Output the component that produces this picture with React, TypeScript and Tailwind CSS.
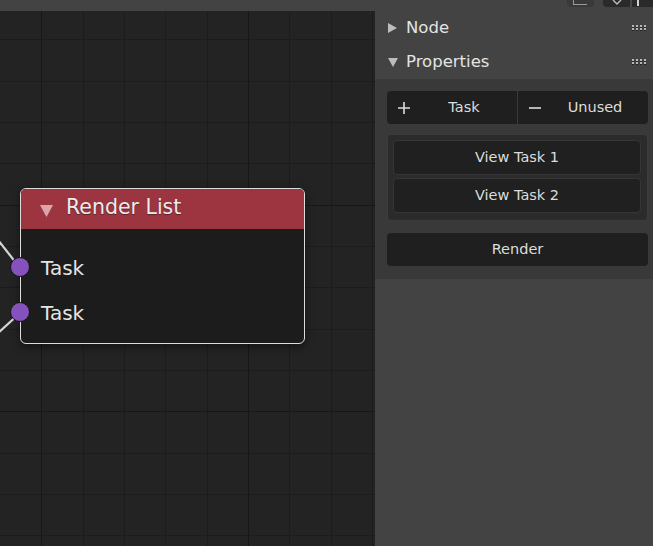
import { ReactNode } from 'react'

const GRID = 41.33
const vLines = [1, 2, 3, 4, 5, 6, 7, 8, 9].map((k) => ({ x: Math.round(k * GRID) + 0.5, major: k === 1 || k === 6 }))
const hLines = [0, 1, 2, 3, 4, 5, 6, 7, 8, 9, 10, 11, 12].map((k) => ({
  y: Math.round(28.3 + k * GRID) + 0.5,
  major: k === 4 || k === 9,
}))

function Grid() {
  return (
    <svg className="absolute inset-0" width="375" height="535">
      {vLines.map((l) => (
        <line key={'v' + l.x} x1={l.x} y1={0} x2={l.x} y2={535} stroke={l.major ? '#171717' : '#1c1c1c'} strokeWidth={1} />
      ))}
      {hLines.map((l) => (
        <line key={'h' + l.y} x1={0} y1={l.y} x2={375} y2={l.y} stroke={l.major ? '#171717' : '#1c1c1c'} strokeWidth={1} />
      ))}
    </svg>
  )
}

function Links() {
  return (
    <svg className="absolute inset-0" width="375" height="535">
      <line x1={-2} y1={229} x2={20} y2={257} stroke="#d6d6d6" strokeWidth={2.2} />
      <line x1={-2} y1={322} x2={20} y2={302} stroke="#d6d6d6" strokeWidth={2.2} />
    </svg>
  )
}

function Socket({ label }: { label: string }) {
  return (
    <div className="relative h-[45px] flex items-center pl-[20px] text-[20px] text-[#e4e4e4]">
      <div className="absolute left-[-11px] top-[12px] w-[20px] h-[20px] rounded-full bg-[#8551bd] border border-[#151515]" />
      {label}
    </div>
  )
}

function RenderNode() {
  return (
    <div className="absolute left-[20px] top-[177px] w-[285px] h-[156px] rounded-[6px] border border-[#dcdcdc] bg-[#1c1c1c]/95 shadow-[0_3px_8px_rgba(0,0,0,0.45)]">
      <div className="h-[40px] flex items-center pb-[3px] rounded-t-[5px] bg-[#9d3541] pl-[19px] text-[20.5px] text-[#ececec] [text-shadow:0_1px_1px_rgba(0,0,0,0.4)]">
        <svg width="13" height="12" viewBox="0 0 13 12" className="mt-[6px]">
          <polygon points="0,0 13,0 6.5,12" fill="#dba6ab" />
        </svg>
        <span className="ml-[13px]">Render List</span>
      </div>
      <div className="pt-[16px]">
        <Socket label="Task" />
        <Socket label="Task" />
      </div>
    </div>
  )
}

function DragHandle() {
  return (
    <svg width="16" height="7" viewBox="0 0 16 7">
      {[0, 4, 8, 12].map((x) => (
        <g key={x}>
          <rect x={x} y={0} width={2} height={2} fill="#b8b8b8" />
          <rect x={x} y={2} width={2} height={1} fill="#222" />
          <rect x={x} y={3} width={2} height={2} fill="#b8b8b8" />
          <rect x={x} y={5} width={2} height={1} fill="#222" />
        </g>
      ))}
    </svg>
  )
}

function PanelHeader({ open, title }: { open: boolean; title: string }) {
  return (
    <div className="h-[34px] flex items-center pl-[13px] pr-[5px] text-[16.5px] text-[#e4e4e4]">
      <svg width="10" height="10" viewBox="0 0 10 10" className="shrink-0">
        {open ? <polygon points="0,1 10,1 5,10" fill="#bcbcbc" /> : <polygon points="0,0 9,5 0,10" fill="#bcbcbc" />}
      </svg>
      <span className="ml-[8px] flex-1">{title}</span>
      <DragHandle />
    </div>
  )
}

function HalfButton({ icon, label }: { icon: ReactNode; label: string }) {
  return (
    <div className="flex-1 flex items-center">
      <div className="w-[24px] pl-[10px] shrink-0 flex">{icon}</div>
      <span className="flex-1 text-center">{label}</span>
    </div>
  )
}

const plus = (
  <svg width="14" height="14" viewBox="0 0 14 14">
    <path d="M7 1v12M1 7h12" stroke="#dcdcdc" strokeWidth="1.6" />
  </svg>
)
const minus = (
  <svg width="14" height="14" viewBox="0 0 14 14">
    <path d="M1 7h12" stroke="#dcdcdc" strokeWidth="1.6" />
  </svg>
)

export default function App() {
  return (
    <div className="w-[653px] h-[546px] flex overflow-hidden bg-[#434343] font-['DejaVu_Sans',sans-serif] text-[14.5px] text-[#dcdcdc]">
      <div className="w-[375px] flex flex-col">
        <div className="h-[11px] shrink-0" />
        <div className="relative flex-1 bg-[#232323] overflow-hidden">
          <Grid />
          <Links />
          <RenderNode />
        </div>
      </div>

      <div className="w-[278px] flex flex-col">
        <div className="h-[11px] shrink-0 flex items-start pl-[192px]">
          <div className="w-[27px] h-[7px] rounded-b-[4px] bg-[#393939] relative">
            <div className="absolute left-[6px] top-0 w-[1px] h-[5px] bg-[#9a9a9a]" />
            <div className="absolute left-[6px] top-[4px] w-[14px] h-[1px] bg-[#9a9a9a]" />
          </div>
          <div className="ml-[9px] flex h-[7px] rounded-bl-[4px] bg-[#2a2a2a] flex-1">
            <div className="w-[27px] flex justify-center">
              <svg width="10" height="6" viewBox="0 0 10 6">
                <path d="M1 0l4 4 4-4" stroke="#bdbdbd" strokeWidth="1.4" fill="none" />
              </svg>
            </div>
            <div className="w-[2px] bg-[#4a4a4a]" />
            <div className="flex-1 pl-[5px]">
              <div className="w-[2px] h-[6px] bg-[#d0d0d0]" />
            </div>
          </div>
        </div>

        <PanelHeader open={false} title="Node" />
        <PanelHeader open={true} title="Properties" />

        <div className="bg-[#393939] pl-[12px] pr-[5px] pt-[12px] pb-[13px]">
          <div className="h-[33px] flex rounded-[4px] bg-[#1f1f1f]">
            <HalfButton icon={plus} label="Task" />
            <div className="w-[1px] bg-[#3a3a3a]" />
            <HalfButton icon={minus} label="Unused" />
          </div>

          <div className="mt-[10px] rounded-[4px] border border-[#3c3c3c] bg-[#2b2b2b] pl-[5px] pr-[6px] pt-[5px] pb-[7px] flex flex-col gap-[3px]">
            <div className="h-[35px] flex items-center justify-center rounded-[4px] border border-[#363636] bg-[#202020]">View Task 1</div>
            <div className="h-[35px] flex items-center justify-center rounded-[4px] border border-[#363636] bg-[#202020]">View Task 2</div>
          </div>

          <div className="mt-[12px] h-[33px] flex items-center justify-center rounded-[4px] bg-[#1f1f1f]">Render</div>
        </div>
      </div>
    </div>
  )
}
